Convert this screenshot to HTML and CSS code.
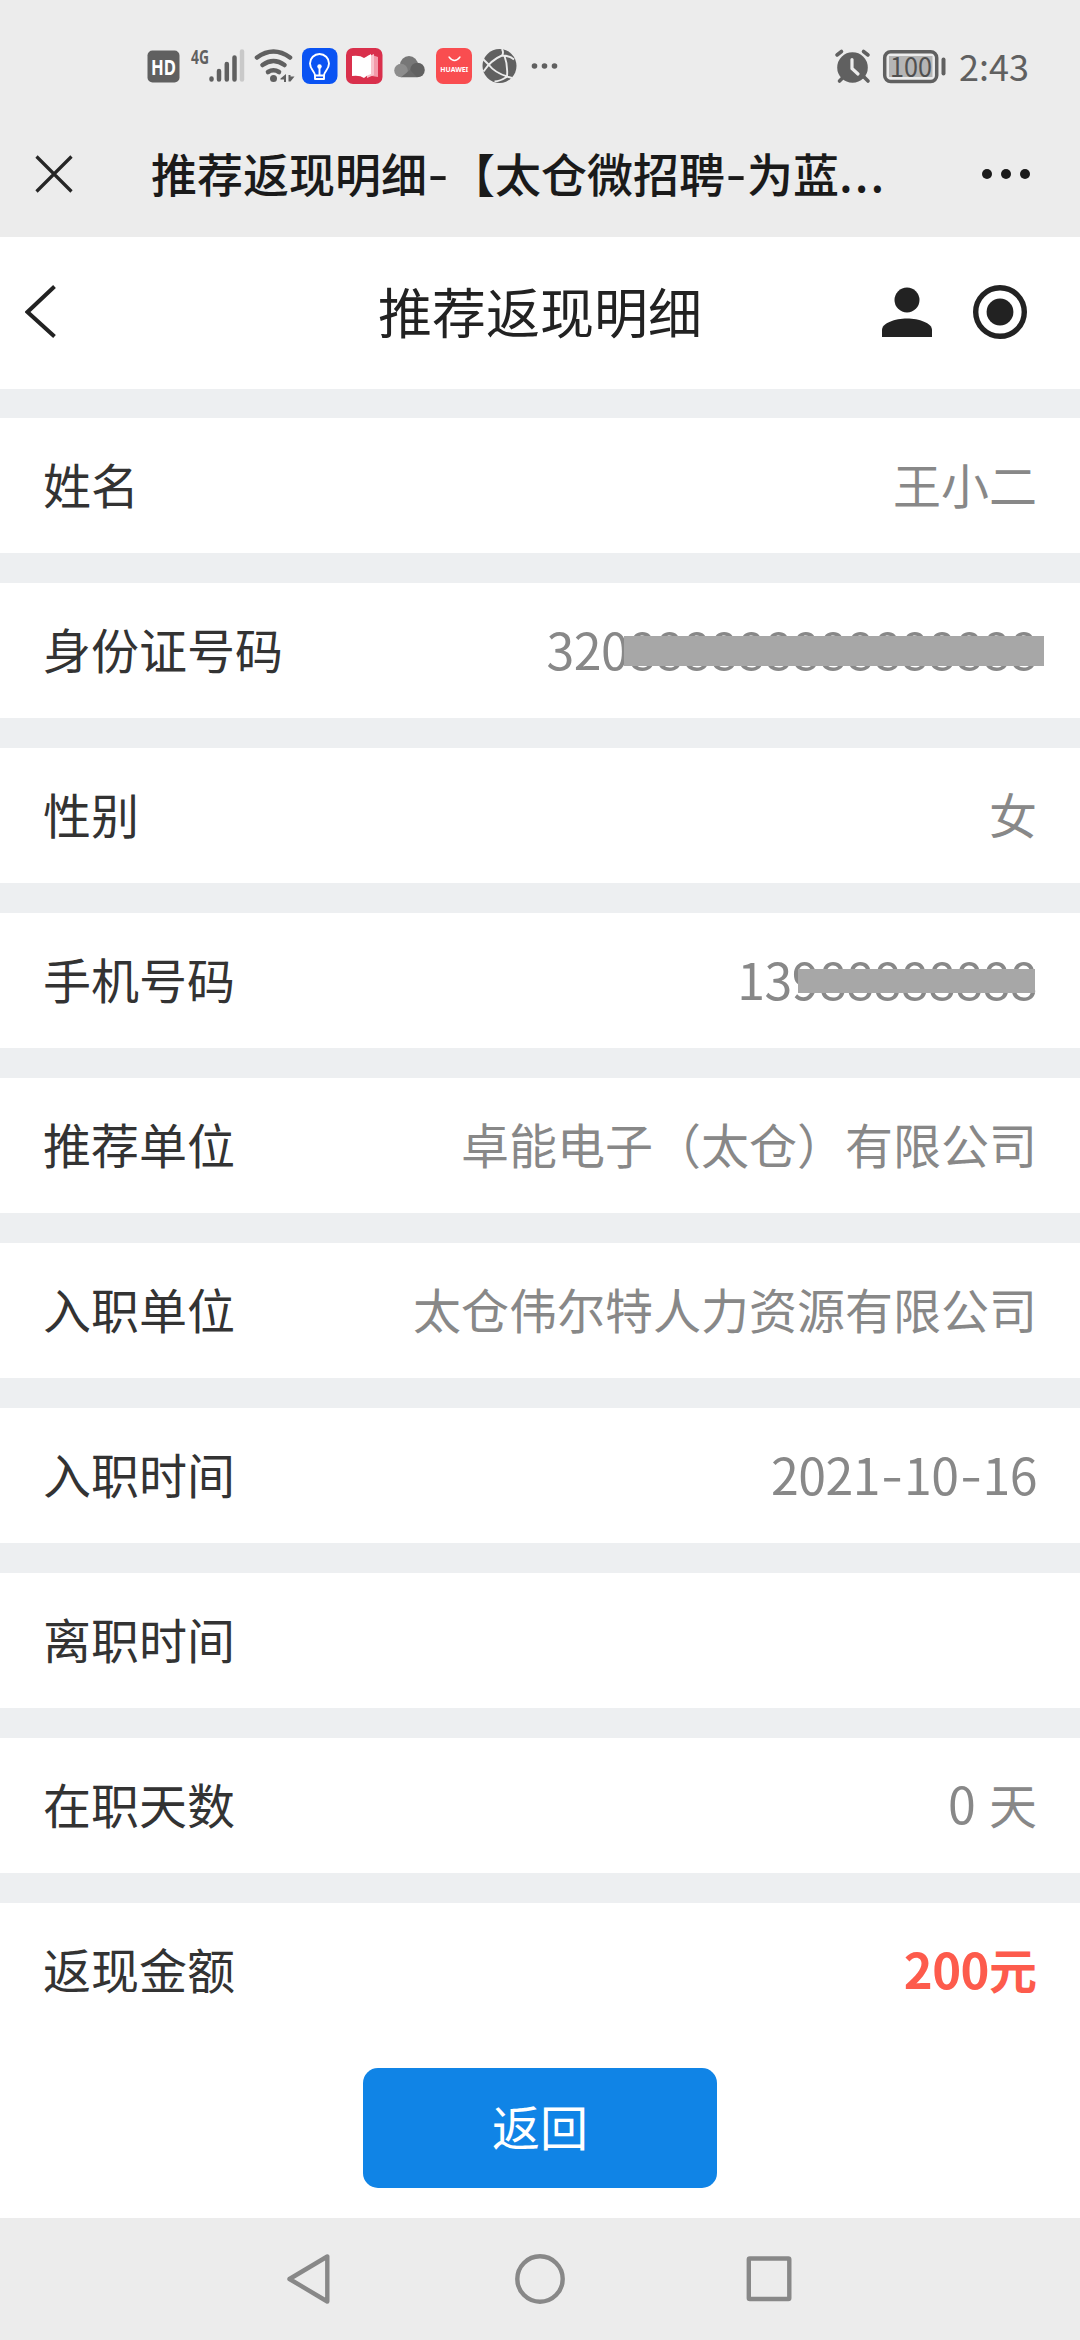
FILE: index.html
```html
<!DOCTYPE html>
<html lang="zh-CN">
<head>
    <meta charset="UTF-8">
    <meta name="viewport" content="width=device-width, initial-scale=1.0">
    <title>推荐返现明细</title>
    <link rel="stylesheet" href="styles.css">
</head>
<body>
    <div class="status-bar">
        <svg class="status-left" width="440" height="50" viewBox="140 40 440 50">
            <!-- HD -->
            <rect x="147.500" y="50.500" width="32" height="32" rx="5" fill="#606060"/>
            <text class="hd" x="163.500" y="74.500" text-anchor="middle" textLength="25" lengthAdjust="spacingAndGlyphs">HD</text>
            <!-- signal -->
            <text class="net" x="191" y="64" textLength="18" lengthAdjust="spacingAndGlyphs">4G</text>
            <g stroke="#606060" stroke-width="4.500" stroke-linecap="round">
                <path d="M211.500 78.500v1M219 71v8.500M226.800 64v15.500M234.500 57.500v22"/>
                <path d="M242 51.500v28" stroke="#c9c9c9"/>
            </g>
            <!-- wifi -->
            <g fill="none" stroke="#606060" stroke-width="4.600" stroke-linecap="round">
                <path d="M257 57.500Q273.500 45.500 290 57.500"/>
                <path d="M262.500 65Q273.500 57 284.500 65"/>
                <path d="M268 72Q273.500 68.500 279 72"/>
            </g>
            <circle cx="273.500" cy="78.500" r="3.500" fill="#606060"/>
            <path d="M280.500 78.500L286 74V82h-2v-2.500h-3.500zM288.500 75h2v1.500h4L290.500 81.500h-2z" fill="#606060"/>
            <!-- bulb -->
            <rect x="302" y="48" width="35.500" height="36" rx="8" fill="#0a53f3"/>
            <g fill="none" stroke="#fff" stroke-width="1.900" stroke-linecap="round" stroke-linejoin="round">
                <path d="M315 75.500c0-4-5-6-5-12a9.500 9.500 0 0 1 19 0c0 6-5 8-5 12z"/>
                <path d="M315 75.500v3.500h9v-3.500M319.500 67v8"/>
            </g>
            <circle cx="319.500" cy="66.500" r="2.200" fill="#fff"/>
            <!-- reader -->
            <rect x="346" y="48" width="36.500" height="36" rx="7" fill="#d9304c"/>
            <path d="M372 55l6 2v20l-6-1z" fill="#f39aaa"/>
            <path d="M367 57l7-3v21l-7 3z" fill="#f8c3cc"/>
            <path d="M352 56q8-1 12 2q5-3 7-4v20q-4 1-7 4q-4-3-12-2z" fill="#fff"/>
            <!-- cloud -->
            <circle cx="409" cy="65" r="9" fill="#777"/>
            <circle cx="417.500" cy="70" r="7.300" fill="#616161"/>
            <circle cx="401" cy="70.500" r="6.800" fill="#8d8d8d"/>
            <path d="M401 77.300L410 70l7 7.300z" fill="#6a6a6a"/>
            <!-- app market -->
            <rect x="436" y="48" width="36" height="36" rx="7" fill="#f94d50"/>
            <path d="M449 57q5.500 7 11 0" fill="none" stroke="#fff" stroke-width="1.300" stroke-linecap="round"/>
            <text class="brand" x="454.300" y="71.500" text-anchor="middle" textLength="28" lengthAdjust="spacingAndGlyphs">HUAWEI</text>
            <!-- browser -->
            <circle cx="499.500" cy="66" r="17" fill="#606060"/>
            <g fill="none" stroke="#ececec" stroke-width="1.900">
                <path d="M502 49q2 4 0 6.500Q491 60 483.500 71.500M502 55.500q7 0 12 4M483 59l5.500 5.500Q495 73 507.500 76.500M504.500 56q3.500 9 2.500 20.500L512 78M507.500 76.500q-8 5-13 5"/>
            </g>
            <g fill="#606060">
                <circle cx="534.500" cy="66" r="2.800"/>
                <circle cx="544.500" cy="66" r="2.800"/>
                <circle cx="554.500" cy="66" r="2.800"/>
            </g>
        </svg>
        <div class="status-right">
            <svg width="116" height="50" viewBox="832 40 116 50">
                <!-- alarm -->
                <g fill="none" stroke="#606060" stroke-width="3.600" stroke-linecap="round">
                    <path d="M837 55l4.500-3.500M868 55l-4.500-3.500M839.500 81l4-4M868 81l-4-4"/>
                </g>
                <circle cx="852.500" cy="67.500" r="15.300" fill="#606060"/>
                <path d="M852 59.500v9l6 5.500" fill="none" stroke="#ececec" stroke-width="3.200" stroke-linecap="round"/>
                <!-- battery -->
                <rect x="884.700" y="51.700" width="52" height="29.800" rx="6" fill="none" stroke="#606060" stroke-width="3.500"/>
                <rect x="889" y="56" width="43.500" height="21" fill="#b5b5b5"/>
                <text class="battery" x="911" y="76.500" text-anchor="middle" textLength="42" lengthAdjust="spacingAndGlyphs">100</text>
                <path d="M943.500 59.500v14" stroke="#606060" stroke-width="4" stroke-linecap="round"/>
            </svg>
            <span class="clock">2:43</span>
        </div>
    </div>

    <div class="browser-bar">
        <svg width="38" height="38" viewBox="0 0 38 38">
            <path d="M1.500 1.500l35 35M36.500 1.500l-35 35" stroke="#262626" stroke-width="3.200"/>
        </svg>
        <div class="browser-title">推荐返现明细<span class="dash">-</span>【太仓微招聘<span class="dash">-</span>为蓝<span class="dots">...</span></div>
        <svg width="50" height="12" viewBox="0 0 50 12" fill="#1a1a1a">
            <circle cx="6" cy="6" r="5"/>
            <circle cx="25" cy="6" r="5"/>
            <circle cx="44" cy="6" r="5"/>
        </svg>
    </div>

    <div class="header">
        <svg class="back" width="32" height="54" viewBox="0 0 32 54">
            <path d="M29.500 1.500L2.500 27l27 24.500" fill="none" stroke="#222" stroke-width="4"/>
        </svg>
        <h1>推荐返现明细</h1>
        <div class="actions">
            <svg width="50" height="54" viewBox="0 0 50 54" fill="#222">
                <circle cx="25" cy="15" r="12.500"/>
                <path d="M0 52V45C0 38 13 33.500 25 33.500S50 38 50 45v7z"/>
            </svg>
            <svg width="54" height="54" viewBox="0 0 54 54">
                <circle cx="27" cy="27" r="24.300" fill="none" stroke="#222" stroke-width="5.400"/>
                <circle cx="27" cy="27" r="13.400" fill="#222"/>
            </svg>
        </div>
    </div>

    <div class="list">
        <div class="row"><label>姓名</label><span class="value">王小二</span></div>
        <div class="row"><label>身份证号码</label><span class="value num masked id-card">320888888888888888</span></div>
        <div class="row"><label>性别</label><span class="value">女</span></div>
        <div class="row"><label>手机号码</label><span class="value num masked phone">13988888888</span></div>
        <div class="row"><label>推荐单位</label><span class="value">卓能电子（太仓）有限公司</span></div>
        <div class="row"><label>入职单位</label><span class="value">太仓伟尔特人力资源有限公司</span></div>
        <div class="row"><label>入职时间</label><span class="value num">2021<span class="dash">-</span>10<span class="dash">-</span>16</span></div>
        <div class="row"><label>离职时间</label><span class="value"></span></div>
        <div class="row"><label>在职天数</label><span class="value days"><span class="num">0</span> 天</span></div>
        <div class="row"><label>返现金额</label><span class="value money"><span class="num">200</span>元</span></div>
    </div>

    <div class="footer">
        <button type="button">返回</button>
    </div>

    <div class="nav-bar">
        <svg width="506" height="54" viewBox="287 2252 506 54" fill="none" stroke="#888" stroke-width="4.400" stroke-linejoin="round">
            <path d="M327.300 2256.500v45L289.500 2279z"/>
            <circle cx="540" cy="2279" r="22.700"/>
            <rect x="748.800" y="2258.500" width="40.500" height="40.500" rx="1"/>
        </svg>
    </div>
</body>
</html>
```

FILE: styles.css
```css
* {
    box-sizing: border-box;
}
body {
    margin: 0;
    width: 1080px;
    height: 2340px;
    display: flex;
    flex-direction: column;
    background-color: #edeff1;
    font-family: "Noto Sans CJK SC", sans-serif;
    overflow: hidden;
}
svg {
    display: block;
    flex: none;
}
.status-bar {
    height: 110px;
    padding: 40px 50px 0 140px;
    display: flex;
    justify-content: space-between;
    align-items: flex-start;
    background: #ececec;
}
.status-bar .hd {
    font: bold 21px "Noto Sans", sans-serif;
    fill: #fff;
}
.status-bar .net {
    font: bold 20px "Noto Sans", sans-serif;
    fill: #606060;
}
.status-bar .brand {
    font: bold 7px "Noto Sans", sans-serif;
    fill: #fff;
}
.status-bar .battery {
    font: 27px "Noto Sans CJK SC", sans-serif;
    fill: #505050;
}
.status-right {
    display: flex;
    gap: 11px;
}
.clock {
    width: 71px;
    font-size: 36px;
    line-height: 51px;
    color: #606060;
    white-space: nowrap;
}
.browser-bar {
    height: 127px;
    padding: 0 49px 0 35px;
    display: flex;
    align-items: center;
    background: #ececec;
}
.browser-title {
    flex: 1;
    padding: 0 0 3px 78px;
    font-size: 46px;
    font-weight: 500;
    color: #1a1a1a;
    white-space: nowrap;
}
.dash {
    display: inline-block;
    width: 22px;
    text-align: center;
    letter-spacing: 0;
    transform: translateY(-1px) scaleX(1.250);
}
.browser-title .dots {
    letter-spacing: 2px;
}
.header {
    height: 152px;
    padding: 0 53px 2px 25px;
    display: grid;
    grid-template-columns: 1fr auto 1fr;
    align-items: center;
    background: #fff;
}
.header h1 {
    margin: 0 0 2px 28px;
    font-size: 54px;
    font-weight: normal;
    line-height: 80px;
    color: #222;
}
.header .actions {
    display: flex;
    justify-content: flex-end;
    gap: 41px;
}
.list {
    padding-top: 29px;
    display: flex;
    flex-direction: column;
    gap: 30px;
}
.row {
    height: 135px;
    padding: 0 43px 6px;
    display: flex;
    justify-content: space-between;
    align-items: center;
    background: #fff;
    font-size: 48px;
    line-height: 70px;
    white-space: nowrap;
}
.row label {
    color: #333;
}
.row .value {
    color: #888;
}
.row .num {
    font-size: 50px;
    letter-spacing: -0.500px;
}
.row .num .dash {
    width: 24px;
}
.row .days {
    word-spacing: 3px;
}
.row .money {
    font-weight: bold;
    color: #fd5b4c;
}
.row .money .num {
    font-size: 49px;
}
.masked {
    position: relative;
}
.masked::after {
    content: "";
    position: absolute;
    background: #a7a7a7;
}
.id-card::after {
    top: 23px;
    right: -7px;
    width: 420px;
    height: 30px;
}
.phone::after {
    top: 26px;
    right: 2px;
    width: 237px;
    height: 24px;
}
.footer {
    flex: 1;
    padding-top: 30px;
    background: #fff;
    text-align: center;
}
.footer button {
    width: 354px;
    height: 120px;
    padding: 0 0 6px;
    border: none;
    border-radius: 15px;
    background-color: #1084e6;
    color: #fff;
    font-family: inherit;
    font-size: 48px;
}
.nav-bar {
    height: 122px;
    display: flex;
    justify-content: center;
    align-items: center;
    background: #ececec;
}
```
